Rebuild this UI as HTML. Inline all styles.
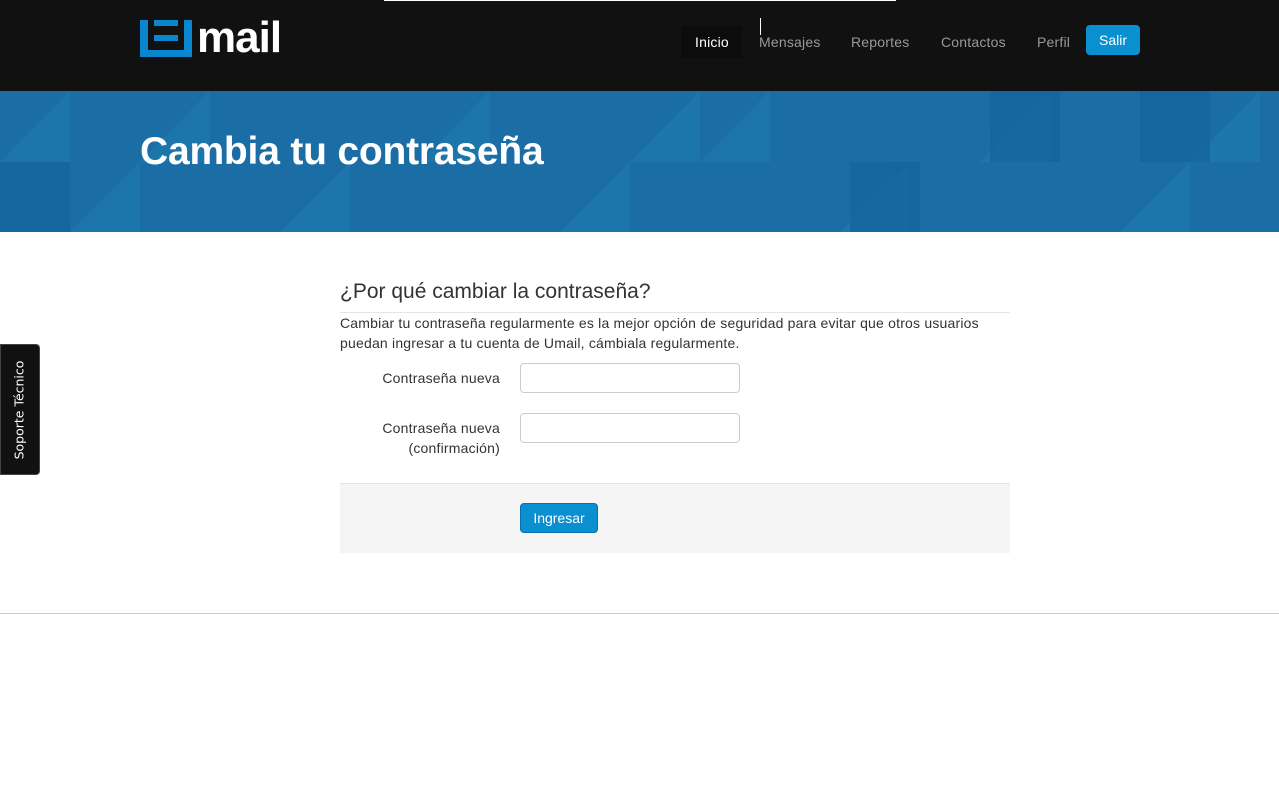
<!DOCTYPE html>
<html><head><meta charset="utf-8"><style>
*{box-sizing:border-box;margin:0;padding:0}
body{width:1279px;height:799px;background:#fff;font-family:"Liberation Sans",sans-serif;position:relative;overflow:hidden}
.top{position:absolute;left:0;top:0;width:1279px;height:91px;background:#111}
.nav a{position:absolute;top:34px;font-size:14px;color:#999;text-decoration:none;letter-spacing:.2px}
.banner{position:absolute;left:0;top:91px;width:1279px;height:141px;background:#1a6ea5;overflow:hidden}
.banner h1{position:absolute;left:140px;top:39px;color:#fff;font-size:39px;font-weight:bold;letter-spacing:-.2px}
.lbl{position:absolute;width:160px;text-align:right;font-size:14px;color:#333;line-height:20px;letter-spacing:.2px}
.inp{position:absolute;left:520px;width:220px;height:30px;border:1px solid #ccc;border-radius:4px;background:#fff}
</style></head><body>
<div class="top">
<div style="position:absolute;left:384px;top:0;width:512px;height:1px;background:#fff"></div>
<svg style="position:absolute;left:140px;top:20px" width="52" height="37"><g fill="#0a86cf"><rect x="0" y="0" width="8" height="37"/><rect x="0" y="30" width="52" height="7"/><rect x="44" y="0" width="8" height="37"/><rect x="14" y="0" width="24" height="6"/><rect x="14" y="15" width="24" height="6"/></g></svg>
<div style="position:absolute;left:197px;top:13px;color:#fff;font-size:44px;font-weight:bold;letter-spacing:-1px;line-height:50px">mail</div>
<div style="position:absolute;left:681px;top:26px;width:61px;height:32px;background:#0c0c0c"></div>
<div class="nav">
<a style="left:695px;color:#fff">Inicio</a>
<a style="left:759px">Mensajes</a>
<a style="left:851px">Reportes</a>
<a style="left:941px">Contactos</a>
<a style="left:1037px">Perfil</a>
</div>
<div style="position:absolute;left:760px;top:18px;width:1px;height:17px;background:#fff"></div>
<div style="position:absolute;left:1086px;top:25px;width:54px;height:30px;background:#0a8fd0;border-radius:4px;color:#fff;font-size:14px;text-align:center;line-height:30px">Salir</div>
</div>
<div class="banner">
<svg width="1279" height="141" style="position:absolute;left:0;top:0">
<g fill="#1d78ad" opacity=".8">
<polygon points="0,71 70,0 70,71"/><polygon points="140,71 210,0 210,71"/><polygon points="280,141 350,71 350,141"/><polygon points="420,71 490,0 490,71"/><polygon points="560,141 630,71 630,141"/><polygon points="700,71 770,0 770,71"/><polygon points="840,141 910,71 910,141"/><polygon points="980,71 1050,0 1050,71"/><polygon points="1120,141 1190,71 1190,141"/><polygon points="70,141 140,71 140,141"/><polygon points="630,71 700,0 700,71"/><polygon points="1190,71 1260,0 1260,71"/>
</g>
<g fill="#1565a0" opacity=".8"><rect x="0" y="71" width="70" height="70"/><rect x="990" y="0" width="70" height="71"/><rect x="1140" y="0" width="70" height="71"/><rect x="850" y="71" width="70" height="70"/></g>
</svg>
<h1>Cambia tu contraseña</h1></div>
<div style="position:absolute;left:340px;top:280px;font-size:21px;color:#333">¿Por qué cambiar la contraseña?</div>
<div style="position:absolute;left:340px;top:312px;width:670px;height:1px;background:#e5e5e5"></div>
<div style="position:absolute;left:340px;top:313px;width:680px;font-size:14px;color:#333;line-height:20px;letter-spacing:.2px">Cambiar tu contraseña regularmente es la mejor opción de seguridad para evitar que otros usuarios puedan ingresar a tu cuenta de Umail, cámbiala regularmente.</div>
<div class="lbl" style="left:340px;top:368px">Contraseña nueva</div>
<div class="inp" style="top:363px"></div>
<div class="lbl" style="left:340px;top:418px">Contraseña nueva (confirmación)</div>
<div class="inp" style="top:413px"></div>
<div style="position:absolute;left:340px;top:483px;width:670px;height:70px;background:#f5f5f5;border-top:1px solid #e5e5e5"></div>
<div style="position:absolute;left:520px;top:503px;width:78px;height:30px;background:#0a8fd0;border:1px solid #0673b0;border-radius:4px;color:#fff;font-size:14px;text-align:center;line-height:28px">Ingresar</div>
<div style="position:absolute;left:0;top:613px;width:1279px;height:1px;background:#ccc"></div>
<div style="position:absolute;left:0;top:344px;width:40px;height:131px;background:#111;border:1px solid #444;border-radius:0 4px 4px 0"></div>
<div style="position:absolute;left:19px;top:410px;transform:translate(-50%,-50%) rotate(-90deg);color:#fff;font-size:12.5px;white-space:nowrap;font-family:'DejaVu Sans',sans-serif">Soporte Técnico</div>
</body></html>
